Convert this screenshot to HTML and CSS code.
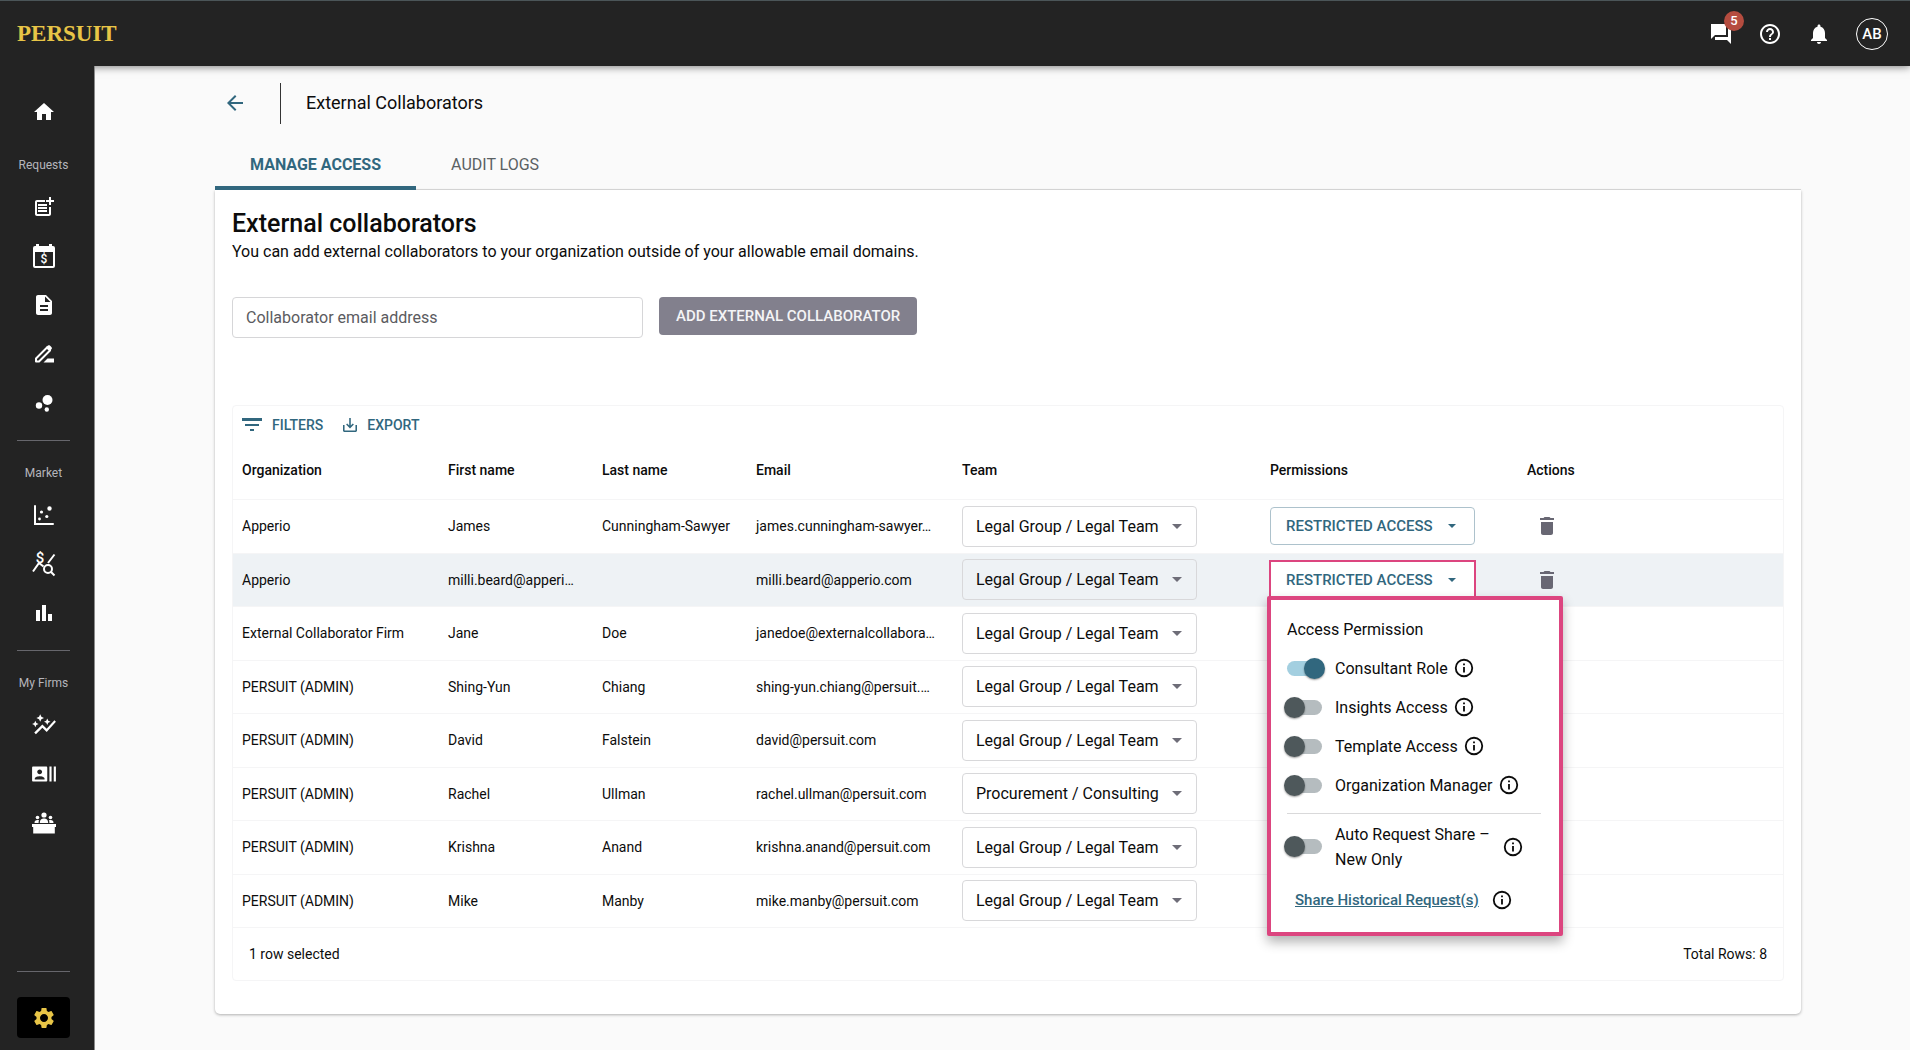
FILE: index.html
```html
<!DOCTYPE html>
<html lang="en">
<head>
<meta charset="utf-8">
<title>External Collaborators</title>
<meta name="viewport" content="width=device-width, initial-scale=1">
<link rel="stylesheet" href="styles.css">
</head>
<body>
<svg class="sprite" aria-hidden="true">
  <symbol id="i-info" viewBox="0 0 24 24"><circle cx="12" cy="12" r="9" fill="none" stroke="currentColor" stroke-width="2"/><path d="M11 7h2v2h-2zM11 11h2v6h-2z"/></symbol>
  <symbol id="i-caret" viewBox="0 0 10 5"><path d="M0 0h10L5 5z"/></symbol>
  <symbol id="i-trash" viewBox="0 0 24 24"><path d="M6 19c0 1.100.9 2 2 2h8c1.100 0 2-.9 2-2V8H6v11zM19 4h-3.500l-1-1h-5l-1 1H5v2h14V4z"/></symbol>
</svg>

<header class="topbar">
  <a class="brand" href="#">PERSUIT</a>
  <div class="topbar-actions">
    <button class="icon-btn" type="button" aria-label="Messages">
      <svg class="ico-24" viewBox="0 0 24 24"><path d="M22 6h-3v9H6v3h12l4 4V6zM17 2H2v15l4-4h11V2z"/></svg>
      <span class="badge">5</span>
    </button>
    <button class="icon-btn" type="button" aria-label="Help">
      <svg class="ico-24" viewBox="0 0 24 24"><path d="M11 18h2v-2h-2v2zm1-16C6.480 2 2 6.480 2 12s4.480 10 10 10 10-4.480 10-10S17.520 2 12 2zm0 18c-4.410 0-8-3.590-8-8s3.590-8 8-8 8 3.590 8 8-3.590 8-8 8zm0-14c-2.210 0-4 1.790-4 4h2c0-1.100.9-2 2-2s2 .9 2 2c0 2-3 1.750-3 5h2c0-2.250 3-2.500 3-5 0-2.210-1.790-4-4-4z"/></svg>
    </button>
    <button class="icon-btn" type="button" aria-label="Notifications">
      <svg class="ico-24" viewBox="0 0 24 24"><path d="M12 22c1.100 0 2-.9 2-2h-4c0 1.100.89 2 2 2zm6-6v-5c0-3.070-1.640-5.640-4.500-6.320V4c0-.83-.67-1.500-1.500-1.500s-1.500.67-1.500 1.500v.68C7.630 5.360 6 7.920 6 11v5l-2 2v1h16v-1l-2-2z"/></svg>
    </button>
    <button class="avatar" type="button">AB</button>
  </div>
</header>

<div class="shell">
  <nav class="sidebar" aria-label="Main">
    <a class="side-link" href="#" aria-label="Home"><svg class="ico-24" viewBox="0 0 24 24"><path d="M10 20v-6h4v6h5v-8h3L12 3 2 12h3v8z"/></svg></a>

    <span class="side-label">Requests</span>
    <a class="side-link" href="#" aria-label="New request"><svg class="ico-24" viewBox="0 0 24 24"><path d="M17 19H5V7h8V5H5c-1.100 0-2 .9-2 2v12c0 1.100.9 2 2 2h12c1.100 0 2-.9 2-2v-7h-2zM19 2h-2v3h-3v2h3v3h2V7h3V5h-3zM6 9h9v2H6zM6 12h9v2H6zM6 15h9v2H6z"/></svg></a>
    <a class="side-link" href="#" aria-label="Rates"><svg class="ico-26" viewBox="0 0 26 26"><path fill-rule="evenodd" d="M5 1h3v2h10V1h3v2h1a2 2 0 0 1 2 2v18a2 2 0 0 1-2 2H4a2 2 0 0 1-2-2V5a2 2 0 0 1 2-2h1zM4 9v14h18V9z"/><text class="ico-text" x="13" y="20" font-size="12">$</text></svg></a>
    <a class="side-link" href="#" aria-label="Documents"><svg class="ico-24" viewBox="0 0 24 24"><path d="M14 2H6c-1.100 0-2 .9-2 2v16c0 1.100.9 2 2 2h12c1.100 0 2-.9 2-2V8l-6-6zm2 16H8v-2h8v2zm0-4H8v-2h8v2zm-3-5V3.500L18.500 9H13z"/></svg></a>
    <a class="side-link" href="#" aria-label="Drafts"><svg class="ico-24" viewBox="0 0 24 24"><path d="M4 16.500 15 5.500l3 3L7 19.500H4z" fill="none" stroke="currentColor" stroke-width="2" stroke-linejoin="round"/><path d="m14 5 2-1.500c.6-.5 1.300-.5 1.900 0l1.700 1.700c.5.6.5 1.300 0 1.900L18 9zM11.500 20.500l4-4H22v4z"/></svg></a>
    <a class="side-link" href="#" aria-label="Bubbles"><svg class="ico-24" viewBox="0 0 24 24"><circle cx="7" cy="14.500" r="3.200"/><circle cx="14.800" cy="18.500" r="2.200"/><circle cx="15.500" cy="9" r="5"/></svg></a>

    <hr class="side-rule">
    <span class="side-label">Market</span>
    <a class="side-link" href="#" aria-label="Scatter"><svg class="ico-24" viewBox="0 0 24 24"><path d="M3 3v18h18" fill="none" stroke="currentColor" stroke-width="2" stroke-linecap="round"/><circle cx="17.500" cy="5.500" r="2.200"/><circle cx="9.500" cy="9" r="1.600"/><circle cx="14.800" cy="13.500" r="1.600"/><circle cx="7.500" cy="16" r="1.400"/></svg></a>
    <a class="side-link" href="#" aria-label="Rate insights"><svg class="ico-26" viewBox="0 0 26 26"><g fill="none" stroke="currentColor" stroke-width="2"><path d="M2 20.500 8 12l4.500 3.500M17 12l6.500-8.500"/><circle cx="17" cy="18" r="4"/><path d="m19.800 20.800 3.700 3.700"/></g><text class="ico-text" x="9" y="12" font-size="15">$</text></svg></a>
    <a class="side-link" href="#" aria-label="Reports"><svg class="ico-24" viewBox="0 0 24 24"><path d="M4 9h4v11H4zM10 4h4v16h-4zM16 13h4v7h-4z"/></svg></a>

    <hr class="side-rule">
    <span class="side-label">My Firms</span>
    <a class="side-link" href="#" aria-label="Firm trends"><svg class="ico-26" viewBox="0 0 24 24"><path d="M14.060 9.940 12 9l2.060-.94L15 6l.94 2.060L18 9l-2.060.94L15 12l-.94-2.060zM4 14l.94-2.060L7 11l-2.060-.94L4 8l-.94 2.060L1 11l2.060.94L4 14zm4.500-5 1.090-2.410L12 5.500 9.590 4.410 8.500 2 7.410 4.410 5 5.500l2.410 1.090L8.500 9zm-4 11.500 6-6.010 4 4L23 8.930l-1.410-1.410-7.090 7.970-4-4L3 19l1.500 1.500z"/></svg></a>
    <a class="side-link" href="#" aria-label="Contacts"><svg class="ico-26" viewBox="0 0 24 24"><path d="M21 5v14h2V5h-2zm-4 14h2V5h-2v14zM14 5H2c-.55 0-1 .45-1 1v12c0 .55.45 1 1 1h12c.55 0 1-.45 1-1V6c0-.55-.45-1-1-1zM8 7.750c1.240 0 2.250 1.010 2.250 2.250S9.240 12.250 8 12.250 5.750 11.240 5.750 10 6.760 7.750 8 7.750zM12.500 17h-9v-.75c0-1.500 3-2.250 4.500-2.250s4.500.75 4.500 2.250V17z"/></svg></a>
    <a class="side-link" href="#" aria-label="Panels"><svg class="ico-26" viewBox="0 0 26 26"><circle cx="13" cy="5" r="2.600"/><circle cx="6.500" cy="7.500" r="1.800"/><circle cx="19.500" cy="7.500" r="1.800"/><path d="M8.800 13c0-3.500 2-4.600 4.200-4.600s4.200 1.100 4.200 4.600zM3.500 13c0-2.200 1-3 3-3 .7 0 1.200.1 1.500.3-.3.800-.4 1.700-.4 2.700zM22.500 13c0-2.200-1-3-3-3-.7 0-1.200.1-1.500.3.3.8.4 1.700.4 2.700zM1 14h24v3h-1.200v6.500H2.200V17H1z"/></svg></a>

    <div class="side-bottom">
      <hr class="side-rule">
      <a class="side-settings" href="#" aria-label="Settings"><svg class="ico-24" viewBox="0 0 24 24"><path d="M19.430 12.980c.04-.32.07-.64.07-.98s-.03-.66-.07-.98l2.110-1.650c.19-.15.24-.42.12-.64l-2-3.460c-.12-.22-.39-.3-.61-.22l-2.490 1c-.52-.4-1.080-.73-1.690-.98l-.38-2.650C14.460 2.180 14.250 2 14 2h-4c-.25 0-.46.18-.49.42l-.38 2.650c-.61.25-1.170.59-1.690.98l-2.490-1c-.23-.09-.49 0-.61.22l-2 3.460c-.13.22-.07.49.12.64l2.110 1.650c-.04.32-.07.65-.07.98s.03.66.07.98l-2.110 1.650c-.19.15-.24.42-.12.64l2 3.460c.12.22.39.3.61.22l2.490-1c.52.4 1.080.73 1.690.98l.38 2.650c.03.24.24.42.49.42h4c.25 0 .46-.18.49-.42l.38-2.650c.61-.25 1.170-.59 1.690-.98l2.490 1c.23.09.49 0 .61-.22l2-3.460c.12-.22.07-.49-.12-.64l-2.110-1.650zM12 16c-2.200 0-4-1.800-4-4s1.800-4 4-4 4 1.800 4 4-1.800 4-4 4z"/></svg></a>
    </div>
  </nav>

  <main class="main">
    <div class="page-head">
      <a class="back" href="#" aria-label="Back"><svg class="ico-24" viewBox="0 0 24 24"><path d="M20 11H7.830l5.590-5.590L12 4l-8 8 8 8 1.410-1.410L7.830 13H20v-2z"/></svg></a>
      <h1 class="page-title">External Collaborators</h1>
    </div>

    <div class="tabs" role="tablist">
      <button class="tab tab-active" type="button" role="tab" aria-selected="true">MANAGE ACCESS</button>
      <button class="tab" type="button" role="tab" aria-selected="false">AUDIT LOGS</button>
    </div>

    <section class="card">
      <h2 class="card-title">External collaborators</h2>
      <p class="card-text">You can add external collaborators to your organization outside of your allowable email domains.</p>

      <form class="add-form">
        <input class="email-input" type="email" placeholder="Collaborator email address" aria-label="Collaborator email address">
        <button class="add-btn" type="button">ADD EXTERNAL COLLABORATOR</button>
      </form>

      <div class="grid">
        <div class="grid-tools">
          <button class="tool" type="button"><svg class="ico-20" viewBox="0 0 20 20"><path d="M0 3h20v3H0zM3 9h14v2H3zM8 14h4v2H8z"/></svg>FILTERS</button>
          <button class="tool" type="button"><svg class="ico-14" viewBox="3 3 18 18"><path d="M19 12v7H5v-7H3v7c0 1.100.9 2 2 2h14c1.100 0 2-.9 2-2v-7h-2zm-6 .67 2.590-2.580L17 11.500l-5 5-5-5 1.410-1.410L11 12.670V3h2z"/></svg>EXPORT</button>
        </div>

        <table class="table">
          <colgroup>
            <col class="c-org"><col class="c-name"><col class="c-name"><col class="c-email"><col class="c-team"><col class="c-perm"><col>
          </colgroup>
          <thead>
            <tr><th>Organization</th><th>First name</th><th>Last name</th><th>Email</th><th>Team</th><th>Permissions</th><th>Actions</th></tr>
          </thead>
          <tbody>
            <tr>
              <td>Apperio</td><td>James</td><td>Cunningham-Sawyer</td><td>james.cunningham-sawyer…</td>
              <td><span class="team"><select class="team-select" aria-label="Team"><option>Legal Group / Legal Team</option></select><svg class="team-caret"><use href="#i-caret"/></svg></span></td>
              <td><button class="perm-btn" type="button">RESTRICTED ACCESS<svg class="perm-caret"><use href="#i-caret"/></svg></button></td>
              <td><button class="trash" type="button" aria-label="Delete"><svg class="ico-24"><use href="#i-trash"/></svg></button></td>
            </tr>
            <tr class="selected">
              <td>Apperio</td><td>milli.beard@apperi…</td><td></td><td>milli.beard@apperio.com</td>
              <td><span class="team"><select class="team-select" aria-label="Team"><option>Legal Group / Legal Team</option></select><svg class="team-caret"><use href="#i-caret"/></svg></span></td>
              <td>
                <div class="perm">
                  <button class="perm-btn perm-open" type="button" aria-expanded="true">RESTRICTED ACCESS<svg class="perm-caret"><use href="#i-caret"/></svg></button>
                  <div class="menu">
                    <p class="menu-title">Access Permission</p>
                    <div class="opt"><label class="opt-label"><input class="switch" type="checkbox" checked>Consultant Role</label><svg class="ico-info"><use href="#i-info"/></svg></div>
                    <div class="opt"><label class="opt-label"><input class="switch" type="checkbox">Insights Access</label><svg class="ico-info"><use href="#i-info"/></svg></div>
                    <div class="opt"><label class="opt-label"><input class="switch" type="checkbox">Template Access</label><svg class="ico-info"><use href="#i-info"/></svg></div>
                    <div class="opt"><label class="opt-label"><input class="switch" type="checkbox">Organization Manager</label><svg class="ico-info"><use href="#i-info"/></svg></div>
                    <hr class="menu-rule">
                    <div class="opt opt-tall"><label class="opt-label"><input class="switch" type="checkbox"><span>Auto Request Share –<br>New Only</span></label><svg class="ico-info"><use href="#i-info"/></svg></div>
                    <div class="share"><a class="share-link" href="#">Share Historical Request(s)</a><svg class="ico-info"><use href="#i-info"/></svg></div>
                  </div>
                </div>
              </td>
              <td><button class="trash" type="button" aria-label="Delete"><svg class="ico-24"><use href="#i-trash"/></svg></button></td>
            </tr>
            <tr>
              <td>External Collaborator Firm</td><td>Jane</td><td>Doe</td><td>janedoe@externalcollabora…</td>
              <td><span class="team"><select class="team-select" aria-label="Team"><option>Legal Group / Legal Team</option></select><svg class="team-caret"><use href="#i-caret"/></svg></span></td><td></td><td></td>
            </tr>
            <tr>
              <td>PERSUIT (ADMIN)</td><td>Shing-Yun</td><td>Chiang</td><td>shing-yun.chiang@persuit.…</td>
              <td><span class="team"><select class="team-select" aria-label="Team"><option>Legal Group / Legal Team</option></select><svg class="team-caret"><use href="#i-caret"/></svg></span></td><td></td><td></td>
            </tr>
            <tr>
              <td>PERSUIT (ADMIN)</td><td>David</td><td>Falstein</td><td>david@persuit.com</td>
              <td><span class="team"><select class="team-select" aria-label="Team"><option>Legal Group / Legal Team</option></select><svg class="team-caret"><use href="#i-caret"/></svg></span></td><td></td><td></td>
            </tr>
            <tr>
              <td>PERSUIT (ADMIN)</td><td>Rachel</td><td>Ullman</td><td>rachel.ullman@persuit.com</td>
              <td><span class="team"><select class="team-select" aria-label="Team"><option>Procurement / Consulting</option></select><svg class="team-caret"><use href="#i-caret"/></svg></span></td><td></td><td></td>
            </tr>
            <tr>
              <td>PERSUIT (ADMIN)</td><td>Krishna</td><td>Anand</td><td>krishna.anand@persuit.com</td>
              <td><span class="team"><select class="team-select" aria-label="Team"><option>Legal Group / Legal Team</option></select><svg class="team-caret"><use href="#i-caret"/></svg></span></td><td></td><td></td>
            </tr>
            <tr>
              <td>PERSUIT (ADMIN)</td><td>Mike</td><td>Manby</td><td>mike.manby@persuit.com</td>
              <td><span class="team"><select class="team-select" aria-label="Team"><option>Legal Group / Legal Team</option></select><svg class="team-caret"><use href="#i-caret"/></svg></span></td><td></td><td></td>
            </tr>
          </tbody>
        </table>

        <div class="grid-foot"><span>1 row selected</span><span>Total Rows: 8</span></div>
      </div>
    </section>
  </main>
</div>
</body>
</html>
```
FILE: styles.css
```css
:root {
  --dark: #232323;
  --teal: #31677e;
  --gold: #e8c547;
  --pink: #dc457f;
  --line: #f5f5f6;
}

* { box-sizing: border-box; }

body {
  margin: 0;
  min-height: 100vh;
  display: flex;
  flex-direction: column;
  background: #fafafa;
  color: #0c0c0c;
  font-family: Roboto, "Liberation Sans", sans-serif;
  font-size: 14px;
}

h1, h2, p, hr { margin: 0; }
hr { border: 0; }
a { color: inherit; text-decoration: none; }
button, input, select { font-family: inherit; margin: 0; }
button { border: 0; background: none; padding: 0; cursor: pointer; }
svg { display: block; flex: none; fill: currentColor; }

.sprite { position: absolute; width: 0; height: 0; }
.ico-14 { width: 14px; height: 14px; }
.ico-20 { width: 20px; height: 20px; }
.ico-24 { width: 24px; height: 24px; }
.ico-26 { width: 26px; height: 26px; }
.ico-info { width: 22px; height: 22px; }
.ico-text { text-anchor: middle; font-weight: 500; }

/* Top bar */
.topbar {
  position: relative;
  z-index: 2;
  height: 66px;
  display: flex;
  align-items: center;
  justify-content: space-between;
  padding: 0 22px 0 17px;
  background: var(--dark);
  border-top: 1px solid #4b5558;
  box-shadow: 0 1px 8px rgba(0, 0, 0, .5);
  color: #fff;
}
.brand {
  font-family: "Liberation Serif", serif;
  font-weight: 700;
  font-size: 23px;
  color: var(--gold);
}
.topbar-actions { display: flex; align-items: center; gap: 25px; }
.icon-btn { position: relative; color: #fff; }
.badge {
  position: absolute;
  left: 15px;
  top: -11px;
  width: 20px;
  height: 20px;
  border-radius: 50%;
  background: #b54c3f;
  font-size: 13px;
  font-weight: 500;
  line-height: 20px;
  text-align: center;
}
.avatar {
  width: 32px;
  height: 32px;
  border: 1px solid #fff;
  border-radius: 50%;
  color: #fff;
  font-size: 15px;
  font-weight: 500;
}

/* Sidebar */
.shell { flex: 1; display: flex; }
.sidebar {
  position: relative;
  z-index: 3;
  flex: none;
  width: 95px;
  display: flex;
  flex-direction: column;
  padding: 21px 24px 12px 17px;
  background: var(--dark);
  border-right: 1px solid #8a8a8a;
  color: #fff;
}
.side-link { height: 49px; display: grid; place-items: center; }
.side-label {
  align-self: center;
  margin: 19px 0 7px;
  line-height: 20px;
  font-size: 12px;
  color: #b5b5bb;
  white-space: nowrap;
}
.side-rule { height: 1px; margin-top: 13px; background: #66666c; }
.side-rule + .side-label { margin-top: 22px; }
.side-bottom { margin-top: auto; }
.side-settings {
  height: 41px;
  margin-top: 25px;
  display: grid;
  place-items: center;
  border-radius: 4px;
  background: #000;
  color: var(--gold);
}

/* Page */
.main { flex: 1; min-width: 0; padding: 17px 109px 36px 120px; }
.page-head { display: flex; align-items: center; height: 41px; }
.back { padding: 0 33px 2px 8px; color: var(--teal); }
.page-title {
  flex: 1;
  padding: 0 0 2px 25px;
  border-left: 1px solid #333;
  font-size: 18px;
  font-weight: 400;
  line-height: 39px;
}

.tabs { display: flex; height: 50px; margin-top: 16px; border-bottom: 1px solid #dcdcdc; }
.tab {
  height: 50px;
  padding: 0 35px 2px;
  font-size: 16px;
  color: #5a6163;
}
.tab-active {
  padding-top: 4px;
  border-bottom: 4px solid var(--teal);
  color: var(--teal);
  font-weight: 700;
}

.card {
  padding: 20px 17px 33px;
  background: #fff;
  border-radius: 0 0 5px 5px;
  box-shadow: 0 1px 3px rgba(0, 0, 0, .3);
}
.card-title { font-size: 25px; font-weight: 500; line-height: 28px; }
.card-text { margin-top: 2px; font-size: 16px; line-height: 24px; }

.add-form { display: flex; align-items: flex-start; gap: 16px; margin-top: 33px; }
.email-input {
  width: 411px;
  height: 41px;
  padding: 0 13px;
  border: 1px solid #d6d6d8;
  border-radius: 4px;
  font-size: 16px;
}
.email-input::placeholder { color: #5b5b60; opacity: 1; }
.add-btn {
  height: 38px;
  padding: 0 17px;
  border-radius: 4px;
  background: #82808d;
  color: #f4f4f6;
  font-size: 15px;
  font-weight: 500;
}

/* Data grid */
.grid { margin-top: 67px; border: 1px solid var(--line); border-radius: 4px; }
.grid-tools { display: flex; align-items: center; gap: 20px; height: 35px; padding: 2px 9px 0; }
.tool { display: flex; align-items: center; gap: 10px; color: var(--teal); font-size: 14px; font-weight: 500; }

.table { width: 100%; table-layout: fixed; border-collapse: separate; border-spacing: 0; }
.c-org, .c-email { width: 206px; }
.c-name { width: 154px; }
.c-team { width: 308px; }
.c-perm { width: 257px; }
.table th, .table td {
  padding: 0 0 0 9px;
  border-bottom: 1px solid var(--line);
  text-align: left;
  white-space: nowrap;
}
.table th { height: 59px; font-size: 14px; font-weight: 500; }
.table td { height: 53px; padding-bottom: 1px; font-size: 14px; }
.table tr:nth-child(odd) td { height: 54px; }
.selected td { background: #eef2f5; }

.team { display: grid; width: 235px; align-items: center; }
.team-select {
  grid-area: 1 / 1;
  height: 41px;
  padding: 0 30px 0 13px;
  border: 1px solid #d8d8da;
  border-radius: 4px;
  appearance: none;
  background: transparent;
  color: inherit;
  font-size: 16px;
}
.team-caret {
  grid-area: 1 / 1;
  justify-self: end;
  width: 10px;
  height: 5px;
  margin-right: 15px;
  color: #6e6d78;
  pointer-events: none;
}

.perm { position: relative; width: 205px; }
.perm-btn {
  display: flex;
  align-items: center;
  justify-content: space-between;
  width: 205px;
  height: 38px;
  padding: 0 18px 0 15px;
  border: 1px solid #adc2cc;
  border-radius: 4px;
  color: var(--teal);
  font-size: 15px;
  font-weight: 500;
}
.perm-caret { width: 8px; height: 4px; }
.perm-open { background: #fff; border-radius: 0; outline: 2px solid var(--pink); outline-offset: -1px; }
.trash { display: block; margin-left: 8px; color: #686773; }

/* Permission menu */
.menu {
  position: absolute;
  left: -3px;
  top: 35px;
  z-index: 4;
  width: 296px;
  padding: 17px 18px 20px 16px;
  border: 4px solid var(--pink);
  border-radius: 2px;
  background: #fff;
  box-shadow: 0 6px 12px rgba(0, 0, 0, .3);
  font-size: 16px;
}
.menu-title { line-height: 26px; }
.opt { display: flex; align-items: center; gap: 5px; height: 39px; margin-left: -3px; }
.menu-title + .opt { margin-top: 6px; }
.opt-label { display: flex; align-items: center; gap: 10px; line-height: 25px; }
.opt-tall { height: 50px; margin-top: 8px; gap: 12px; }
.menu-rule { height: 1px; margin-top: 8px; background: #d9d9da; }
.switch {
  position: relative;
  flex: none;
  display: flex;
  align-items: center;
  width: 41px;
  height: 21px;
  margin: 0;
  appearance: none;
}
.switch::before {
  content: "";
  position: absolute;
  inset: 3px;
  border-radius: 8px;
  background: #b5bcbf;
}
.switch::after {
  content: "";
  position: relative;
  width: 21px;
  height: 21px;
  border-radius: 50%;
  background: #4e585b;
  box-shadow: 0 1px 2px rgba(0, 0, 0, .4);
}
.switch:checked { justify-content: flex-end; }
.switch:checked::before { background: #a3cfe0; }
.switch:checked::after { background: var(--teal); }

.share { display: flex; align-items: center; gap: 12px; margin-top: 16px; padding-left: 8px; line-height: 24px; }
.share-link { color: var(--teal); font-size: 15px; font-weight: 500; text-decoration: underline; }

.grid-foot {
  display: flex;
  align-items: center;
  justify-content: space-between;
  height: 52px;
  padding: 0 16px;
  font-size: 14px;
}
```
